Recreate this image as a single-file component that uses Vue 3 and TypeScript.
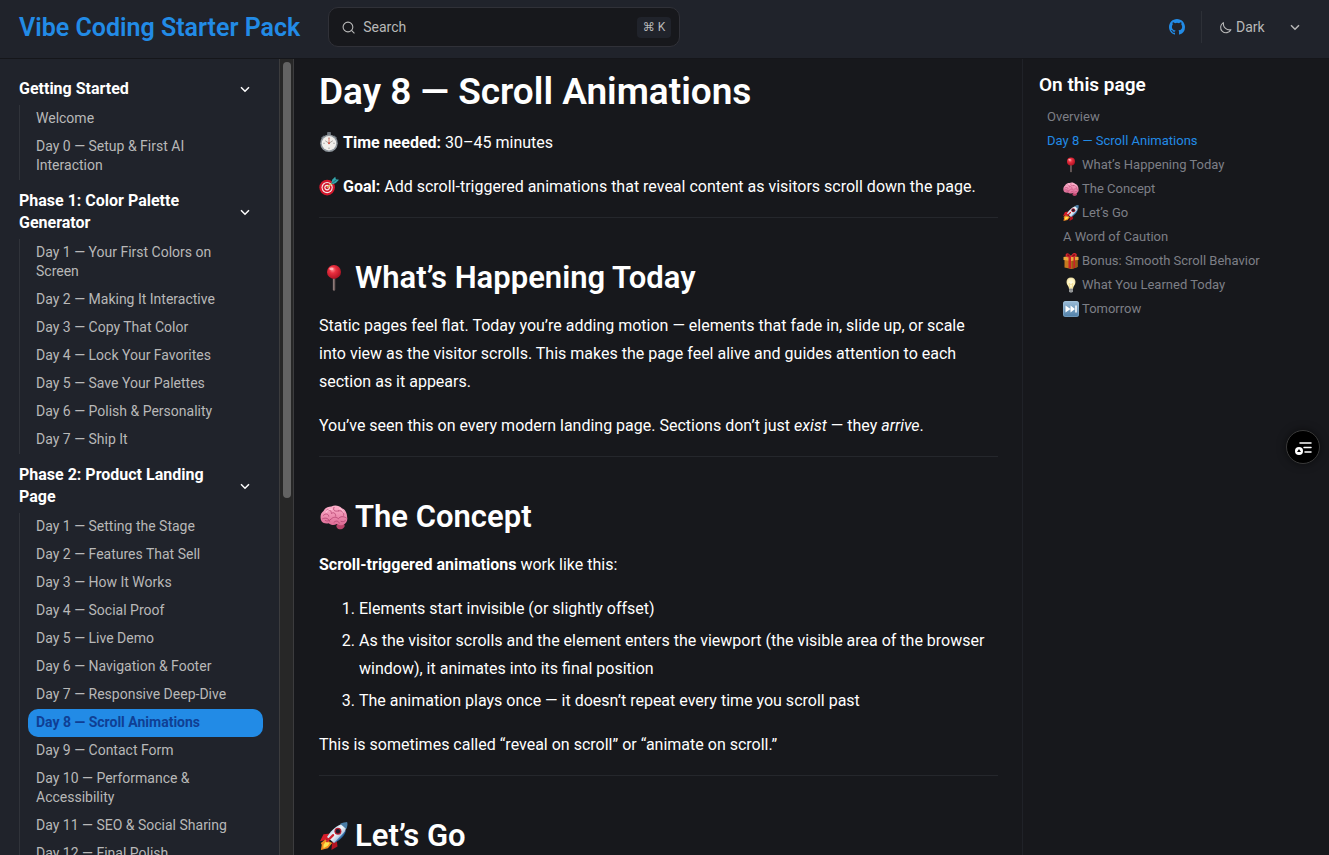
<script setup lang="ts">
import { ref } from 'vue'

interface NavGroup {
  title: string
  items: string[]
}

interface TocEntry {
  label: string
  icon?: string
  nested?: boolean
}

const current = 'Day 8 — Scroll Animations'

const groups: NavGroup[] = [
  { title: 'Getting Started', items: ['Welcome', 'Day 0 — Setup & First AI Interaction'] },
  {
    title: 'Phase 1: Color Palette Generator',
    items: [
      'Day 1 — Your First Colors on Screen',
      'Day 2 — Making It Interactive',
      'Day 3 — Copy That Color',
      'Day 4 — Lock Your Favorites',
      'Day 5 — Save Your Palettes',
      'Day 6 — Polish & Personality',
      'Day 7 — Ship It',
    ],
  },
  {
    title: 'Phase 2: Product Landing Page',
    items: [
      'Day 1 — Setting the Stage',
      'Day 2 — Features That Sell',
      'Day 3 — How It Works',
      'Day 4 — Social Proof',
      'Day 5 — Live Demo',
      'Day 6 — Navigation & Footer',
      'Day 7 — Responsive Deep-Dive',
      'Day 8 — Scroll Animations',
      'Day 9 — Contact Form',
      'Day 10 — Performance & Accessibility',
      'Day 11 — SEO & Social Sharing',
      'Day 12 — Final Polish',
    ],
  },
]

const toc: TocEntry[] = [
  { label: 'Overview' },
  { label: 'Day 8 — Scroll Animations' },
  { label: 'What’s Happening Today', icon: 'pin', nested: true },
  { label: 'The Concept', icon: 'brain', nested: true },
  { label: 'Let’s Go', icon: 'rocket', nested: true },
  { label: 'A Word of Caution', nested: true },
  { label: 'Bonus: Smooth Scroll Behavior', icon: 'gift', nested: true },
  { label: 'What You Learned Today', icon: 'bulb', nested: true },
  { label: 'Tomorrow', icon: 'next', nested: true },
]

const closed = ref<string[]>([])
const query = ref('')
const theme = ref('Dark')

function toggle(title: string) {
  closed.value = closed.value.includes(title)
    ? closed.value.filter((t) => t !== title)
    : [...closed.value, title]
}
</script>

<template>
  <svg class="sprites" aria-hidden="true">
    <defs>
      <radialGradient id="g-red" cx="0.4" cy="0.35" r="0.7">
        <stop offset="0" stop-color="#ff8b8f" />
        <stop offset="0.35" stop-color="#ea2f3f" />
        <stop offset="1" stop-color="#a80f20" />
      </radialGradient>
      <linearGradient id="g-pink" x1="0" y1="0" x2="0" y2="1">
        <stop offset="0" stop-color="#ffb3cd" />
        <stop offset="1" stop-color="#dd6a94" />
      </linearGradient>
      <linearGradient id="g-hull" x1="0" y1="0" x2="1" y2="1">
        <stop offset="0" stop-color="#7fb4dc" />
        <stop offset="0.5" stop-color="#f2f6fa" />
        <stop offset="1" stop-color="#3c78b4" />
      </linearGradient>
      <linearGradient id="g-key" x1="0" y1="0" x2="0" y2="1">
        <stop offset="0" stop-color="#9cbdd8" />
        <stop offset="1" stop-color="#4f7fa8" />
      </linearGradient>
      <radialGradient id="g-bulb" cx="0.5" cy="0.5" r="0.6">
        <stop offset="0" stop-color="#fffef0" />
        <stop offset="0.6" stop-color="#fff4c0" />
        <stop offset="1" stop-color="#d9c88c" />
      </radialGradient>
    </defs>
    <symbol id="e-watch" viewBox="0 0 32 32">
      <rect x="13" y="0" width="6" height="6" rx="1" fill="#6f767e" />
      <path d="M24 5l5 4-2 3-5-4z" fill="#59616a" />
      <path d="M8 5L3 9l2 3 5-4z" fill="#59616a" />
      <circle cx="16" cy="18" r="14" fill="#8f969c" />
      <circle cx="16" cy="18" r="11.500" fill="#f1efeb" />
      <path d="M16 9v2M16 25v2M7 18h2M23 18h2" stroke="#8a8a8a" stroke-width="1.500" />
      <path d="M10 14l6 4 6-4" fill="none" stroke="#8d867f" stroke-width="1.200" />
      <path d="M16 9v9" stroke="#e25b45" stroke-width="1.200" />
      <circle cx="16" cy="18" r="1.500" fill="#d24a38" />
    </symbol>
    <symbol id="e-target" viewBox="0 0 32 32">
      <circle cx="13" cy="18.500" r="12.500" fill="#d3182c" />
      <circle cx="13" cy="18.500" r="9" fill="#f6e9ea" />
      <circle cx="13" cy="18.500" r="7.200" fill="#d3182c" />
      <circle cx="13" cy="18.500" r="4.500" fill="#f6e9ea" />
      <circle cx="13" cy="18.500" r="2.700" fill="#d3182c" />
      <path d="M13 18.500L23 10" stroke="#d8b05c" stroke-width="2.500" />
      <path d="M20 11l1-5 5-5 1 4 5 1-5 5-5 2z" fill="#35a5ab" />
      <path d="M20 12l9-7" stroke="#1a6f78" stroke-width="1.500" />
    </symbol>
    <symbol id="e-pin" viewBox="0 0 32 32">
      <path d="M14.700 15h2.600v14l-1.300 2-1.300-2z" fill="#8d7a78" />
      <path d="M16.500 15h.8v14l-.8 1z" fill="#5c4c4b" />
      <circle cx="16" cy="9" r="8" fill="url(#g-red)" />
      <ellipse cx="13" cy="5.500" rx="2.500" ry="1.600" fill="#ffc4c8" opacity=".8" />
    </symbol>
    <symbol id="e-brain" viewBox="0 0 32 32">
      <path d="M19 25c3-2 8-2 9 0s-2 5-5 5-5-3-4-5z" fill="#b9446a" />
      <path d="M1 19c-1-4 0-8 3-10 2-4 6-5 9-5 4-2 9-1 12 2 4 1 6 6 6 10 1 4-1 8-5 9-2 1-5 0-7-1-3 2-7 1-9-1-3 1-8 0-9-4z" fill="url(#g-pink)" />
      <path d="M4 14c3-3 6-1 6 1M8 8c3-1 5 1 5 4 3-2 5 0 5 3M16 5c-2 4 2 5 5 4M21 9c4-1 7 2 6 5M3 18c4-2 7 0 8 3M12 19c3-4 7-3 9-1 2-3 6-3 9-1M16 22c2-2 5-2 6 1M6 20c2 1 4 1 6-1M24 21c2 1 4 0 5-1" fill="none" stroke="#b84875" stroke-width="1" stroke-linecap="round" />
      <path d="M7 11c1-3 4-4 7-4M22 6c3 1 4 3 5 5" fill="none" stroke="#ffd2e1" stroke-width="1" />
    </symbol>
    <symbol id="e-rocket" viewBox="0 0 32 32">
      <path d="M12 13L4 14 0 22l9-2z" fill="#d51d2a" />
      <path d="M19 20l1 8-7 4 1-9z" fill="#b51422" />
      <path d="M6 20l-5 4 1 2-1 6 8-2 5-6z" fill="#f48b20" />
      <path d="M7 22l-3 4v4l5-3 2-3z" fill="#ffe34e" />
      <path d="M30 1c1 8-3 16-14 23l-8-7C14 7 22 2 30 1z" fill="url(#g-hull)" />
      <path d="M31 0c1 3 0 6-1 8l-7-6c3-1 6-2 8-2z" fill="#497da6" />
      <path d="M16 24L30 9c-2 7-6 11-14 15z" fill="#2868a8" opacity=".8" />
      <circle cx="20.500" cy="10.500" r="4" fill="#b81f31" />
      <circle cx="20.500" cy="10.500" r="2.500" fill="#211b2c" />
      <path d="M8 22l7-7" stroke="#cf2230" stroke-width="2.500" stroke-linecap="round" />
    </symbol>
    <symbol id="e-gift" viewBox="0 0 32 32">
      <path d="M3 13h26v15l-12 4L3 29z" fill="#c47b20" />
      <path d="M1 8l16-3 14 3v6l-14 2L1 14z" fill="#e9a83e" />
      <path d="M17 16v16l12-4V14z" fill="#9b5815" />
      <path d="M11 7h5v24l-5-1zM21 7h3v23l-3 1z" fill="#c9202a" />
      <path d="M15 8C8 10 3 6 6 2s8 1 10 5c1-5 6-9 10-6s1 7-8 7z" fill="#d4252f" />
      <path d="M14 7C10 7 7 5 9 3s4 1 5 4zM18 7c1-3 4-5 6-4s-1 4-6 4z" fill="#861018" />
    </symbol>
    <symbol id="e-bulb" viewBox="0 0 32 32">
      <path d="M16 1c-6 0-9 4-9 9 0 6 5 8 5 14h8c0-6 5-8 5-14 0-5-3-9-9-9z" fill="url(#g-bulb)" />
      <path d="M12 23h8v6l-2 2h-4l-2-2z" fill="#a4a5a6" />
      <path d="M12 25h8M12 28h8" stroke="#66686b" stroke-width="1" />
      <path d="M14 22l-2-9 4 2 4-2-2 9" fill="none" stroke="#e7c554" stroke-width="1" />
    </symbol>
    <symbol id="e-next" viewBox="0 0 32 32">
      <rect x="0" y="0" width="32" height="32" rx="5" fill="url(#g-key)" />
      <rect x="1" y="1" width="30" height="30" rx="4" fill="none" stroke="#b1cde0" stroke-width="1" opacity=".6" />
      <path d="M5 9l10 7-10 7zM15 9l9 7-9 7zM24.500 9h3v14h-3z" fill="#fff" />
    </symbol>
    <symbol id="i-chevron" viewBox="0 0 24 24">
      <path d="M4 8.500l8 8 8-8" fill="none" stroke="currentColor" stroke-width="3" />
    </symbol>
  </svg>

  <div class="app">
    <header class="topbar">
      <a class="brand" href="#">Vibe Coding Starter Pack</a>
      <label class="search">
        <svg viewBox="0 0 24 24" aria-hidden="true">
          <circle cx="11" cy="11" r="9" fill="none" stroke="currentColor" stroke-width="2" />
          <path d="M17.500 17.500L23 23" stroke="currentColor" stroke-width="2" />
        </svg>
        <input v-model="query" type="text" placeholder="Search" aria-label="Search" />
        <kbd>⌘ K</kbd>
      </label>
      <div class="tools">
        <a class="github" href="#" aria-label="GitHub">
          <svg viewBox="0 0 16 16" fill="currentColor">
            <path d="M8 0C3.580 0 0 3.580 0 8c0 3.540 2.290 6.530 5.470 7.590.4.070.55-.17.55-.38 0-.19-.01-.82-.01-1.490-2.010.37-2.530-.49-2.690-.94-.09-.23-.48-.94-.82-1.130-.28-.15-.68-.52-.01-.53.63-.01 1.080.58 1.230.82.72 1.210 1.870.87 2.330.66.07-.52.28-.87.51-1.070-1.780-.2-3.640-.89-3.640-3.950 0-.87.31-1.590.82-2.150-.08-.2-.36-1.020.08-2.120 0 0 .67-.21 2.200.82a7.600 7.600 0 0 1 4 0c1.530-1.040 2.200-.82 2.200-.82.44 1.100.16 1.920.08 2.120.51.56.82 1.270.82 2.150 0 3.070-1.870 3.750-3.650 3.950.29.25.54.73.54 1.480 0 1.070-.01 1.930-.01 2.200 0 .21.15.46.55.38A8.010 8.010 0 0 0 16 8c0-4.420-3.580-8-8-8z" />
          </svg>
        </a>
        <label class="theme">
          <svg class="moon" viewBox="0 0 24 24" aria-hidden="true">
            <path d="M8 3a10 10 0 1 0 14 13C15 18 7 12 8 3z" fill="none" stroke="currentColor" stroke-width="2" stroke-linejoin="round" />
          </svg>
          <select v-model="theme" aria-label="Color theme">
            <option>Dark</option>
            <option>Light</option>
          </select>
          <svg class="chevron" aria-hidden="true"><use href="#i-chevron" /></svg>
        </label>
      </div>
    </header>

    <div class="columns">
      <aside class="sidebar">
        <nav class="nav" aria-label="Lessons">
          <section v-for="group in groups" :key="group.title" class="group">
            <button type="button" class="group-title" @click="toggle(group.title)">
              <span>{{ group.title }}</span>
              <svg class="chevron" aria-hidden="true"><use href="#i-chevron" /></svg>
            </button>
            <ul v-if="!closed.includes(group.title)">
              <li v-for="item in group.items" :key="item">
                <a href="#" :class="{ active: item === current }">{{ item }}</a>
              </li>
            </ul>
          </section>
        </nav>
        <div class="track"><div class="thumb"></div></div>
      </aside>

      <main class="content">
        <h1>Day 8 — Scroll Animations</h1>
        <p>
          <svg class="emoji" role="img" aria-label="Stopwatch"><use href="#e-watch" /></svg>
          <strong>Time needed:</strong> 30–45 minutes
        </p>
        <p>
          <svg class="emoji" role="img" aria-label="Target"><use href="#e-target" /></svg>
          <strong>Goal:</strong> Add scroll-triggered animations that reveal content as visitors scroll down the page.
        </p>
        <hr />
        <h2><svg class="emoji" role="img" aria-label="Pin"><use href="#e-pin" /></svg> What’s Happening Today</h2>
        <p>
          Static pages feel flat. Today you’re adding motion — elements that fade in, slide up, or scale<br />
          into view as the visitor scrolls. This makes the page feel alive and guides attention to each<br />
          section as it appears.
        </p>
        <p>
          You’ve seen this on every modern landing page. Sections don’t just <em>exist</em> — they <em>arrive</em>.
        </p>
        <hr />
        <h2><svg class="emoji" role="img" aria-label="Brain"><use href="#e-brain" /></svg> The Concept</h2>
        <p><strong>Scroll-triggered animations</strong> work like this:</p>
        <ol>
          <li>Elements start invisible (or slightly offset)</li>
          <li>
            As the visitor scrolls and the element enters the viewport (the visible area of the browser window), it
            animates into its final position
          </li>
          <li>The animation plays once — it doesn’t repeat every time you scroll past</li>
        </ol>
        <p>This is sometimes called “reveal on scroll” or “animate on scroll.”</p>
        <hr />
        <h2><svg class="emoji" role="img" aria-label="Rocket"><use href="#e-rocket" /></svg> Let’s Go</h2>
      </main>

      <aside class="toc">
        <h3>On this page</h3>
        <ul>
          <li v-for="entry in toc" :key="entry.label" :class="{ nested: entry.nested }">
            <a href="#" :class="{ active: entry.label === current }">
              <svg v-if="entry.icon" class="emoji" aria-hidden="true"><use :href="'#e-' + entry.icon" /></svg>
              <span>{{ entry.label }}</span>
            </a>
          </li>
        </ul>
      </aside>
    </div>

    <button type="button" class="float" aria-label="Open reading tools">
      <svg viewBox="0 0 18 16" aria-hidden="true">
        <path d="M6 4h11M10 8.500h7M11 13h6" stroke="#fff" stroke-width="1.500" stroke-linecap="round" />
        <circle cx="5" cy="12" r="4" fill="#fff" />
        <path d="M5 10l2 3H3z" fill="#000" />
      </svg>
    </button>
  </div>
</template>

<style>
body {
  margin: 0;
  background: #17181c;
}
</style>

<style scoped>
.sprites {
  position: absolute;
  width: 0;
  height: 0;
}

.app {
  display: flex;
  flex-direction: column;
  height: 100vh;
  overflow: hidden;
  background: #17181c;
  color: #fff;
  font-family: Roboto, 'Noto Sans', 'DejaVu Sans', sans-serif;
  font-size: 16px;
}

a {
  color: inherit;
  text-decoration: none;
}

ul {
  margin: 0;
  padding: 0;
  list-style: none;
}

button,
input,
select {
  border: 0;
  background: none;
  color: inherit;
  font: inherit;
}

.chevron {
  width: 12px;
  height: 12px;
  flex: none;
}

.topbar {
  display: flex;
  align-items: center;
  flex: none;
  box-sizing: border-box;
  height: 59px;
  padding: 0 28px 4px 19px;
  border-bottom: 1px solid #15161a;
  background: #20232b;
}

.brand {
  margin-right: 28px;
  color: #228be6;
  font-size: 25px;
  font-weight: 600;
  white-space: nowrap;
}

.search {
  display: flex;
  align-items: center;
  box-sizing: border-box;
  width: 352px;
  height: 40px;
  padding: 0 8px 0 13px;
  border: 1px solid #303138;
  border-radius: 10px;
  background: #17181c;
  color: #b8b8b8;
}

.search svg {
  width: 13px;
  height: 13px;
  flex: none;
}

.search input {
  flex: 1;
  min-width: 0;
  padding: 0 8px;
  outline: 0;
  font-size: 14px;
}

.search input::placeholder {
  color: #b8b8b8;
  opacity: 1;
}

kbd {
  padding: 0 6px;
  border-radius: 4px;
  background: #20232b;
  font-family: inherit;
  font-size: 12px;
  line-height: 21px;
}

.tools {
  display: flex;
  align-items: center;
  margin-left: auto;
  color: #b8b8b8;
}

.github {
  display: flex;
  margin-right: 16px;
  color: #228be6;
}

.github svg {
  width: 16px;
  height: 16px;
}

.theme {
  display: flex;
  align-items: center;
  height: 32px;
  padding-left: 17px;
  border-left: 1px solid #2d3037;
}

.moon {
  width: 13px;
  height: 13px;
}

.theme select {
  width: 57px;
  padding: 0 0 0 4px;
  appearance: none;
  font-size: 14px;
}

.columns {
  display: grid;
  grid-template-columns: 294px minmax(0, 1fr) 307px;
  flex: 1;
  min-height: 0;
}

.sidebar {
  display: flex;
  min-height: 0;
  background: #20232b;
}

.nav {
  flex: 1;
  min-width: 0;
  overflow: hidden;
  padding: 19px 16px 0 19px;
}

.track {
  box-sizing: border-box;
  width: 15px;
  padding: 3px 2px 0 3px;
  border: solid #3c3c3e;
  border-width: 0 1px;
  background: #272727;
}

.thumb {
  height: 55%;
  border-radius: 4px;
  background: #636363;
}

.group {
  margin-bottom: 10px;
}

.group-title {
  display: flex;
  align-items: center;
  justify-content: space-between;
  width: 100%;
  padding: 0 12px 5px 0;
  font-weight: 700;
  line-height: 22px;
  text-align: left;
}

.group-title span {
  max-width: 200px;
}

.group ul {
  padding-left: 8px;
  border-left: 1px solid #30333a;
}

.group a {
  display: block;
  padding: 4px 24px 5px 8px;
  border-radius: 10px;
  color: #b8b8b8;
  font-size: 14px;
  line-height: 19px;
}

.group a.active {
  background: #228be6;
  color: #0f3f94;
  font-weight: 700;
}

.content {
  min-width: 0;
  overflow: hidden;
  padding: 10px 24px 0 25px;
  line-height: 28px;
}

h1 {
  margin: 0 0 14px;
  font-size: 37px;
  font-weight: 600;
  line-height: 46px;
}

h2 {
  display: flex;
  align-items: center;
  gap: 6px;
  margin: 0 0 14px;
  font-size: 31px;
  font-weight: 600;
  line-height: 40px;
}

.content p {
  margin: 0 0 16px;
}

.content p .emoji {
  width: 20px;
  height: 20px;
  margin-right: 4px;
  vertical-align: -4px;
}

h2 .emoji {
  width: 30px;
  height: 28px;
}

hr {
  margin: 16px 0 40px;
  border: 0;
  border-top: 1px solid #25272c;
}

ol {
  margin: 0 0 16px;
  padding-left: 40px;
}

ol li + li {
  margin-top: 4px;
}

.toc {
  padding: 14px 16px;
  border-left: 1px solid #202228;
}

h3 {
  margin: 0 0 8px;
  font-size: 19px;
  font-weight: 600;
  line-height: 24px;
}

.toc li {
  padding-left: 8px;
}

.toc li.nested {
  padding-left: 24px;
}

.toc a {
  display: flex;
  align-items: center;
  gap: 3px;
  color: #7d7f86;
  font-size: 13px;
  line-height: 24px;
}

.toc a.active {
  color: #228be6;
}

.toc .emoji {
  width: 16px;
  height: 16px;
}

.float {
  position: fixed;
  top: 430px;
  right: 9px;
  display: flex;
  align-items: center;
  justify-content: center;
  width: 34px;
  height: 34px;
  padding: 0;
  border: 1px solid #3a3a3a;
  border-radius: 50%;
  background: #000;
  box-shadow: 0 0 8px #0008;
}

.float svg {
  width: 18px;
  height: 16px;
}
</style>
